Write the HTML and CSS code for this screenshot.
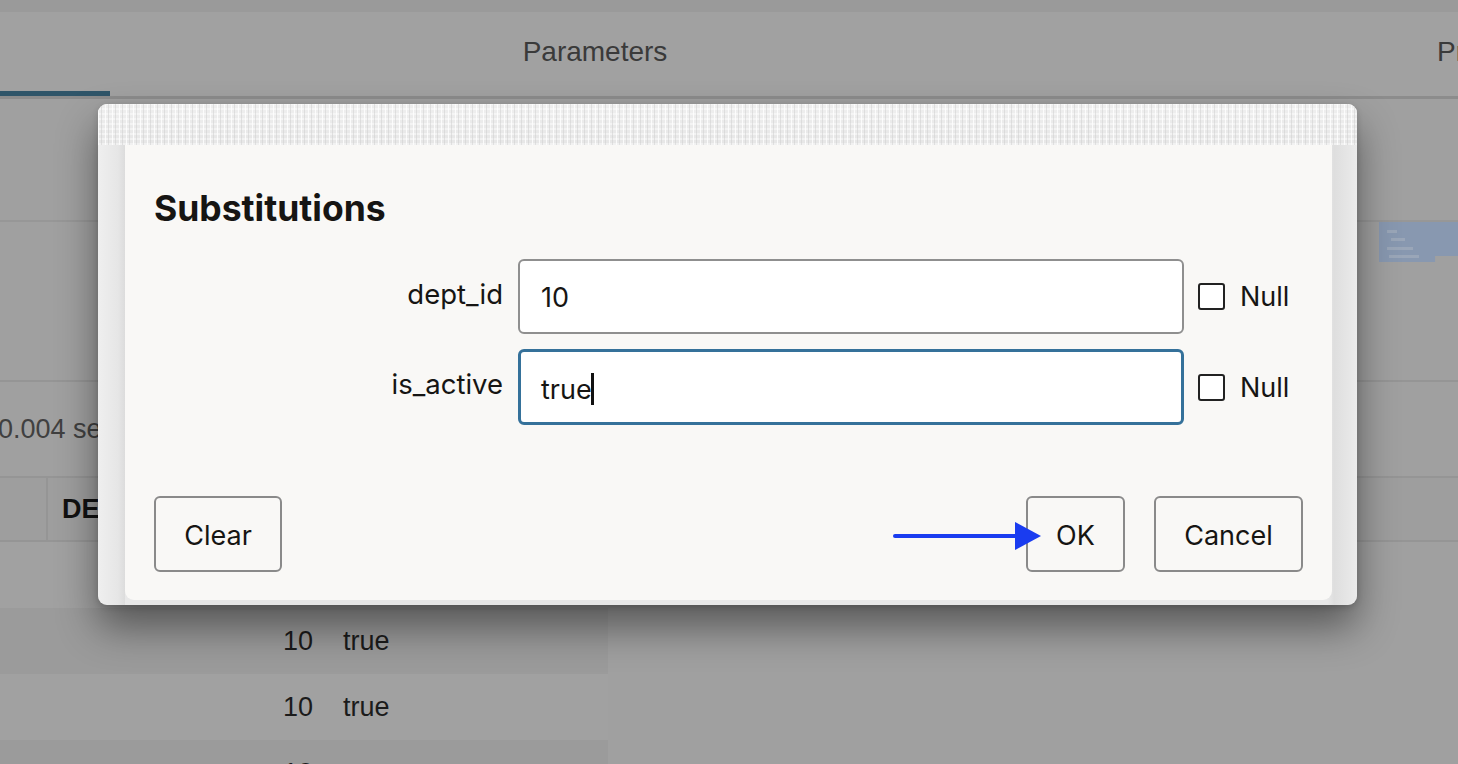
FILE: index.html
```html
<!DOCTYPE html>
<html>
<head>
<meta charset="utf-8">
<link rel="stylesheet" href="styles.css">
</head>
<body>
<div class="app">
  <div class="topstrip"></div>
  <div class="tabs">
    <div class="tab tab-active"></div>
    <div class="tab tab-params">Parameters</div>
    <div class="tab tab-props">Properties</div>
  </div>
  <div class="tabline"></div>
  <div class="toolbar"></div>
  <div class="section">
    <div class="mini-chart">
      <span class="mc-line l1"></span>
      <span class="mc-line l2"></span>
      <span class="mc-line l3"></span>
      <span class="mc-line l4"></span>
    </div>
  </div>
  <div class="status">0.004 seconds</div>
  <div class="grid">
    <div class="grid-head">
      <div class="gh-cell gh-first"></div>
      <div class="gh-cell">DEPT_ID</div>
    </div>
    <div class="grid-row"><div class="c-num">10</div><div class="c-txt">true</div></div>
    <div class="grid-row odd"><div class="c-num">10</div><div class="c-txt">true</div></div>
    <div class="grid-row"><div class="c-num">10</div><div class="c-txt">true</div></div>
    <div class="grid-row odd"><div class="c-num">10</div><div class="c-txt">true</div></div>
  </div>
</div>

<div class="dialog">
  <div class="dlg-band"></div>
  <div class="dlg-panel">
    <h1 class="dlg-title">Substitutions</h1>
    <div class="form">
      <div class="f-label">dept_id</div>
      <div class="f-input">10</div>
      <div class="f-check"><span class="cbox"></span><span>Null</span></div>

      <div class="f-label">is_active</div>
      <div class="f-input f-focus">true<span class="caret"></span></div>
      <div class="f-check"><span class="cbox"></span><span>Null</span></div>
    </div>
    <div class="dlg-buttons">
      <button class="btn btn-clear">Clear</button>
      <div class="btn-right">
        <button class="btn btn-ok">OK</button>
        <button class="btn btn-cancel">Cancel</button>
      </div>
    </div>
  </div>
  <svg class="arrow" width="150" height="32" viewBox="0 0 150 32">
    <line x1="2" y1="16" x2="124" y2="16" stroke="#1a3cf0" stroke-width="4" stroke-linecap="round"/>
    <polygon points="122,2 148,16 122,30" fill="#1a3cf0"/>
  </svg>
</div>
</body>
</html>
```

FILE: styles.css
```css
* { box-sizing: border-box; }
html, body { margin: 0; padding: 0; }
body {
  width: 1458px;
  height: 764px;
  overflow: hidden;
  position: relative;
  background: #a0a0a0;
  font-family: "Liberation Sans", Arial, sans-serif;
}
.app { width: 1458px; height: 764px; display: flex; flex-direction: column; overflow: hidden; }
.app > * { flex: none; }

.topstrip {
  height: 12px;
  background: #9a9a9a;
}
.tabs {
  height: 84px;
  display: flex;
  background: #a1a1a1;
  overflow: hidden;
}
.tab {
  flex: none;
  height: 84px;
  display: flex;
  align-items: center;
  font-size: 28px;
  color: #3a3a3a;
  padding-bottom: 5px;
}
.tab-active { width: 110px; border-bottom: 5px solid #2f5569; }
.tab-params { width: 970px; justify-content: center; }
.tab-props { width: 378px; padding-left: 357px; white-space: nowrap; overflow: hidden; }
.tabline { height: 3px; background: #8c8c8c; }

.toolbar { height: 123px; border-bottom: 2px solid #979797; }
.section {
  height: 160px;
  border-bottom: 2px solid #959595;
  display: flex;
  justify-content: flex-end;
}
.mini-chart {
  width: 79px;
  height: 40px;
  background: #8898b0;
  position: relative;
  clip-path: polygon(0 0, 100% 0, 100% 85%, 71% 85%, 71% 100%, 0 100%);
}
.mc-line { position: absolute; height: 3px; background: #9aa6b8; left: 8px; }
.l1 { top: 8px; width: 10px; }
.l2 { top: 16px; width: 14px; left: 12px; }
.l3 { top: 25px; width: 26px; }
.l4 { top: 33px; width: 30px; left: 10px; }

.status {
  height: 96px;
  font-size: 27px;
  color: #404040;
  display: flex;
  align-items: center;
  padding-top: 0;
  margin-left: -2px;
  border-bottom: 2px solid #959595;
}

.grid { width: 608px; }
.grid-head {
  height: 64px;
  display: flex;
  background: #9e9e9e;
  border-bottom: 2px solid #959595;
  width: 1458px;
}
.gh-cell {
  height: 100%;
  display: flex;
  align-items: center;
  padding-left: 14px;
  font-size: 27px;
  font-weight: bold;
  color: #111;
}
.gh-first { width: 48px; border-right: 2px solid #959595; padding: 0; }
.grid-row {
  height: 66px;
  display: flex;
  align-items: center;
  font-size: 27px;
  color: #1b1b1b;
  background: #a1a1a1;
}
.grid-row.odd { background: #9b9b9b; }
.c-num { width: 313px; text-align: right; }
.c-txt { padding-left: 30px; }

/* dialog */
.dialog {
  position: absolute;
  left: 98px;
  top: 104px;
  width: 1259px;
  height: 501px;
  border-radius: 9px;
  background: linear-gradient(90deg, #efefef 0, #e6e6e6 20px, #dcdcdc 27px, #e8e8e8 27px, #e8e8e8 1230px, #dedede 1236px, #ebebeb 1259px);
  box-shadow: 0 22px 40px rgba(0,0,0,0.45), 0 2px 6px rgba(0,0,0,0.15);
  display: flex;
  flex-direction: column;
}
.dlg-band {
  height: 41px;
  flex: none;
  border-radius: 9px 9px 0 0;
  background:
    repeating-linear-gradient(90deg, rgba(255,255,255,0.8) 0 1px, rgba(255,255,255,0) 1px 3px, rgba(205,205,205,0.5) 3px 4px, rgba(255,255,255,0) 4px 7px),
    repeating-linear-gradient(0deg, rgba(255,255,255,0.45) 0 2px, rgba(0,0,0,0) 2px 5px),
    linear-gradient(180deg, #efefef, #e6e6e6);
}
.dlg-panel {
  flex: 1;
  margin: 0 25px 5px 27px;
  background: #f9f8f6;
  border-radius: 0 0 9px 9px;
  padding: 0 29px 28px 29px;
  display: flex;
  flex-direction: column;
  font-family: Inter, "Liberation Sans", sans-serif;
  color: #161513;
}
.dlg-title {
  margin: 42px 0 0 0;
  font-size: 35.5px;
  line-height: 44px;
  font-weight: 700;
}
.form {
  margin-top: 28px;
  display: grid;
  grid-template-columns: 349px 666px auto;
  column-gap: 15px;
  row-gap: 15px;
  align-items: center;
}
.f-label {
  text-align: right;
  font-size: 27.5px;
  padding-bottom: 6px;
}
.f-input {
  height: 75px;
  border: 2px solid #8f8f8f;
  border-radius: 6px;
  background: #ffffff;
  font-size: 27px;
  padding-left: 21px;
  padding-top: 2px;
  display: flex;
  align-items: center;
}
.f-focus {
  height: 76px;
  border: 3px solid #35719a;
  padding-left: 20px;
  padding-top: 4px;
}
.caret {
  display: inline-block;
  width: 3px;
  height: 32px;
  background: #111;
  margin-left: -1px;
}
.f-check {
  display: flex;
  align-items: center;
  gap: 15px;
  font-size: 27px;
  margin-left: -1px;
}
.cbox {
  width: 27px;
  height: 27px;
  border: 2px solid #222;
  border-radius: 3px;
  background: #fff;
}
.dlg-buttons {
  margin-top: auto;
  display: flex;
  justify-content: space-between;
  align-items: center;
}
.btn-right { display: flex; gap: 29px; }
.btn {
  height: 76px;
  border: 2px solid #8a8a8a;
  border-radius: 6px;
  background: #f9f8f6;
  font-family: Inter, "Liberation Sans", sans-serif;
  font-size: 27px;
  color: #161513;
  padding: 3px 0 0 0;
}
.btn-clear { width: 128px; }
.btn-ok { width: 99px; }
.btn-cancel { width: 149px; }

.arrow {
  position: absolute;
  left: 795px;
  top: 416px;
}
```
